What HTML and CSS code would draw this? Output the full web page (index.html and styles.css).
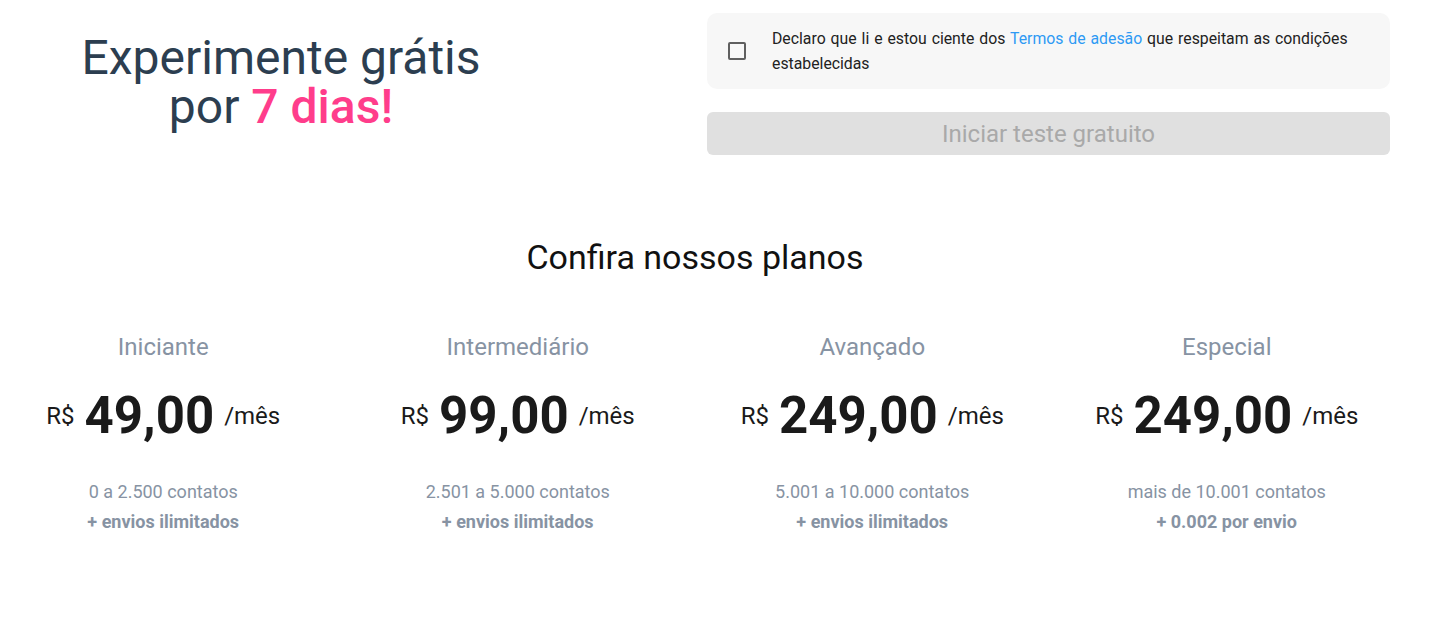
FILE: index.html
```html
<!DOCTYPE html>
<html lang="pt-BR">
<head>
    <meta charset="UTF-8">
    <meta name="viewport" content="width=device-width, initial-scale=1.0">
    <title>Experimente grátis</title>
    <link rel="stylesheet" href="styles.css">
</head>
<body>
    <div class="page">
        <section class="trial">
            <div class="trial-title">
                <h1>Experimente grátis<br>por <span class="highlight">7 dias!</span></h1>
            </div>
            <div class="trial-form">
                <label class="terms">
                    <span class="checkbox"></span>
                    <span class="terms-text">Declaro que li e estou ciente dos <a href="#">Termos de adesão</a> que respeitam as condições estabelecidas</span>
                </label>
                <button type="button" class="start-btn" disabled>Iniciar teste gratuito</button>
            </div>
        </section>

        <section class="plans">
            <h2>Confira nossos planos</h2>
            <div class="plan-list">
                <div class="plan">
                    <div class="plan-name">Iniciante</div>
                    <div class="plan-price">
                        <span class="currency">R$</span>
                        <span class="amount">49,00</span>
                        <span class="period">/mês</span>
                    </div>
                    <div class="plan-info">
                        <div>0 a 2.500 contatos</div>
                        <div class="extra">+ envios ilimitados</div>
                    </div>
                </div>
                <div class="plan">
                    <div class="plan-name">Intermediário</div>
                    <div class="plan-price">
                        <span class="currency">R$</span>
                        <span class="amount">99,00</span>
                        <span class="period">/mês</span>
                    </div>
                    <div class="plan-info">
                        <div>2.501 a 5.000 contatos</div>
                        <div class="extra">+ envios ilimitados</div>
                    </div>
                </div>
                <div class="plan">
                    <div class="plan-name">Avançado</div>
                    <div class="plan-price">
                        <span class="currency">R$</span>
                        <span class="amount">249,00</span>
                        <span class="period">/mês</span>
                    </div>
                    <div class="plan-info">
                        <div>5.001 a 10.000 contatos</div>
                        <div class="extra">+ envios ilimitados</div>
                    </div>
                </div>
                <div class="plan">
                    <div class="plan-name">Especial</div>
                    <div class="plan-price">
                        <span class="currency">R$</span>
                        <span class="amount">249,00</span>
                        <span class="period">/mês</span>
                    </div>
                    <div class="plan-info">
                        <div>mais de 10.001 contatos</div>
                        <div class="extra">+ 0.002 por envio</div>
                    </div>
                </div>
            </div>
        </section>
    </div>
</body>
</html>
```

FILE: styles.css
```css
body {
    margin: 0;
    font-family: Roboto, "Liberation Sans", Arial, sans-serif;
    background-color: #fff;
    color: #1a1a1a;
}

.page {
    width: 1390px;
}

.trial {
    display: flex;
    justify-content: space-between;
    padding-top: 13px;
}

.trial-title {
    width: 562px;
    text-align: center;
}

h1 {
    margin: 0;
    padding-top: 20px;
    font-size: 48px;
    font-weight: 400;
    line-height: 49px;
    color: #2c3e50;
}

.highlight {
    color: #ff3d8b;
    font-weight: 500;
}

.trial-form {
    width: 683px;
    display: flex;
    flex-direction: column;
    gap: 23px;
}

.terms {
    display: flex;
    align-items: center;
    gap: 26px;
    padding: 13px 21px;
    background-color: #f7f7f7;
    border-radius: 10px;
}

.checkbox {
    flex: none;
    width: 14px;
    height: 14px;
    border: 2px solid #5f5f5f;
    border-radius: 2px;
}

.terms-text {
    font-size: 15.8px;
    line-height: 25px;
    word-spacing: 1px;
    color: #222;
}

.terms-text a {
    color: #2e9af4;
    text-decoration: none;
}

.start-btn {
    height: 43px;
    border: none;
    border-radius: 6px;
    background-color: #e0e0e0;
    color: #a9a9a9;
    font-family: inherit;
    font-size: 24px;
}

.plans {
    padding-top: 82px;
}

h2 {
    margin: 0;
    text-align: center;
    font-size: 34px;
    font-weight: 400;
    color: #111;
}

.plan-list {
    display: grid;
    grid-template-columns: repeat(4, 1fr);
    gap: 28px;
    margin-top: 56px;
}

.plan {
    display: flex;
    flex-direction: column;
    align-items: center;
}

.plan-name {
    font-size: 24px;
    color: #8793a3;
}

.plan-price {
    display: flex;
    align-items: center;
    gap: 10px;
    margin-top: 25px;
    color: #1a1a1a;
}

.currency,
.period {
    font-size: 24px;
}

.amount {
    font-size: 51px;
    font-weight: 700;
}

.plan-info {
    margin-top: 32px;
    text-align: center;
    font-size: 18px;
    line-height: 30px;
    color: #8793a3;
}

.extra {
    font-weight: 700;
}
```
